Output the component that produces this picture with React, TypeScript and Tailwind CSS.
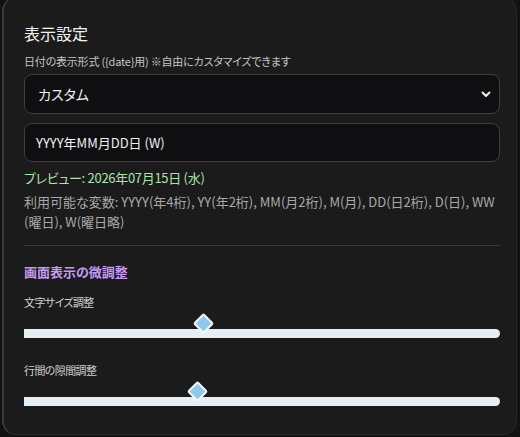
import React from "react";

const font = {
  fontFamily: '"Noto Sans CJK JP", "Noto Sans", sans-serif',
  fontFeatureSettings: '"palt"',
};

function Slider({ label, pos }: { label: string; pos: number }) {
  return (
    <div className="flex flex-col">
      <div className="text-[11px] leading-[16px] tracking-[-0.6px] text-[#cfcfcf]">{label}</div>
      <div className="relative mt-[18px] h-[10px]">
        <div className="absolute left-0 right-0 top-[1px] h-[9px] rounded-r-full bg-[#e4f0f5]" />
        <div
          className="absolute left-0 top-[3px] h-[6px] bg-[#e4f0f5]"
          style={{ width: `${pos}px` }}
        />
        <div
          className="absolute top-[-12px] h-[15px] w-[15px] rotate-45 rounded-[2px] border-2 border-[#f3f8fb] bg-[#8ccbef]"
          style={{ left: `${pos - 7}px` }}
        />
      </div>
    </div>
  );
}

export default function App() {
  return (
    <div className="h-[437px] w-[520px] overflow-hidden bg-[#121212]" style={font}>
      <div className="ml-[2px] mt-[-3px] h-[438px] w-[515px] rounded-[14px] border border-l-2 border-[#2a2a2a] border-l-[#3a3a3a] bg-[#1b1b1b] pl-[20px] pr-[15px] pt-[24px]">
        <h2 className="text-[16px] leading-[22px] text-[#f2f2f2]">表示設定</h2>
        <div className="mt-[10px] text-[11px] leading-[14px] tracking-[-0.2px] text-[#c4c4c4]">
          日付の表示形式 ({"{date}"}用) ※自由にカスタマイズできます
        </div>
        <div className="mt-[6px] flex h-[40px] w-[476px] items-center justify-between rounded-[8px] border border-[#3e3e3e] bg-[#0f0f11] pl-[13px] pr-[7px]">
          <span className="text-[14px] text-[#f0f0f0]">カスタム</span>
          <svg width="12" height="12" viewBox="0 0 12 12">
            <path d="M2.5 4.5 L6 8 L9.5 4.5" fill="none" stroke="#f0f0f0" strokeWidth="2" strokeLinecap="round" strokeLinejoin="round" />
          </svg>
        </div>
        <div className="mt-[9px] flex h-[39px] w-[476px] items-center rounded-[8px] border border-[#3e3e3e] bg-[#0f0f11] pl-[11px]">
          <span className="text-[13px] text-[#f0f0f0]">YYYY年MM月DD日 (W)</span>
        </div>
        <div className="mt-[7px] text-[13px] leading-[18px] tracking-[-0.3px] text-[#a8e6a8]">プレビュー: 2026年07月15日 (水)</div>
        <div className="mt-[5px] w-[476px] text-[13px] leading-[20px] text-[#a9a9a9]">
          利用可能な変数: YYYY(年4桁), YY(年2桁), MM(月2桁), M(月), DD(日2桁), D(日), WW (曜日), W(曜日略)
        </div>
        <div className="mt-[13px] h-px w-[476px] bg-[#3a3a3a]" />
        <div className="mt-[17px] text-[13px] font-bold leading-[18px] text-[#c49bf2]">画面表示の微調整</div>
        <div className="mt-[13px] flex w-[476px] flex-col gap-[24px]">
          <Slider label="文字サイズ調整" pos={179} />
          <Slider label="行間の隙間調整" pos={173} />
        </div>
      </div>
    </div>
  );
}
